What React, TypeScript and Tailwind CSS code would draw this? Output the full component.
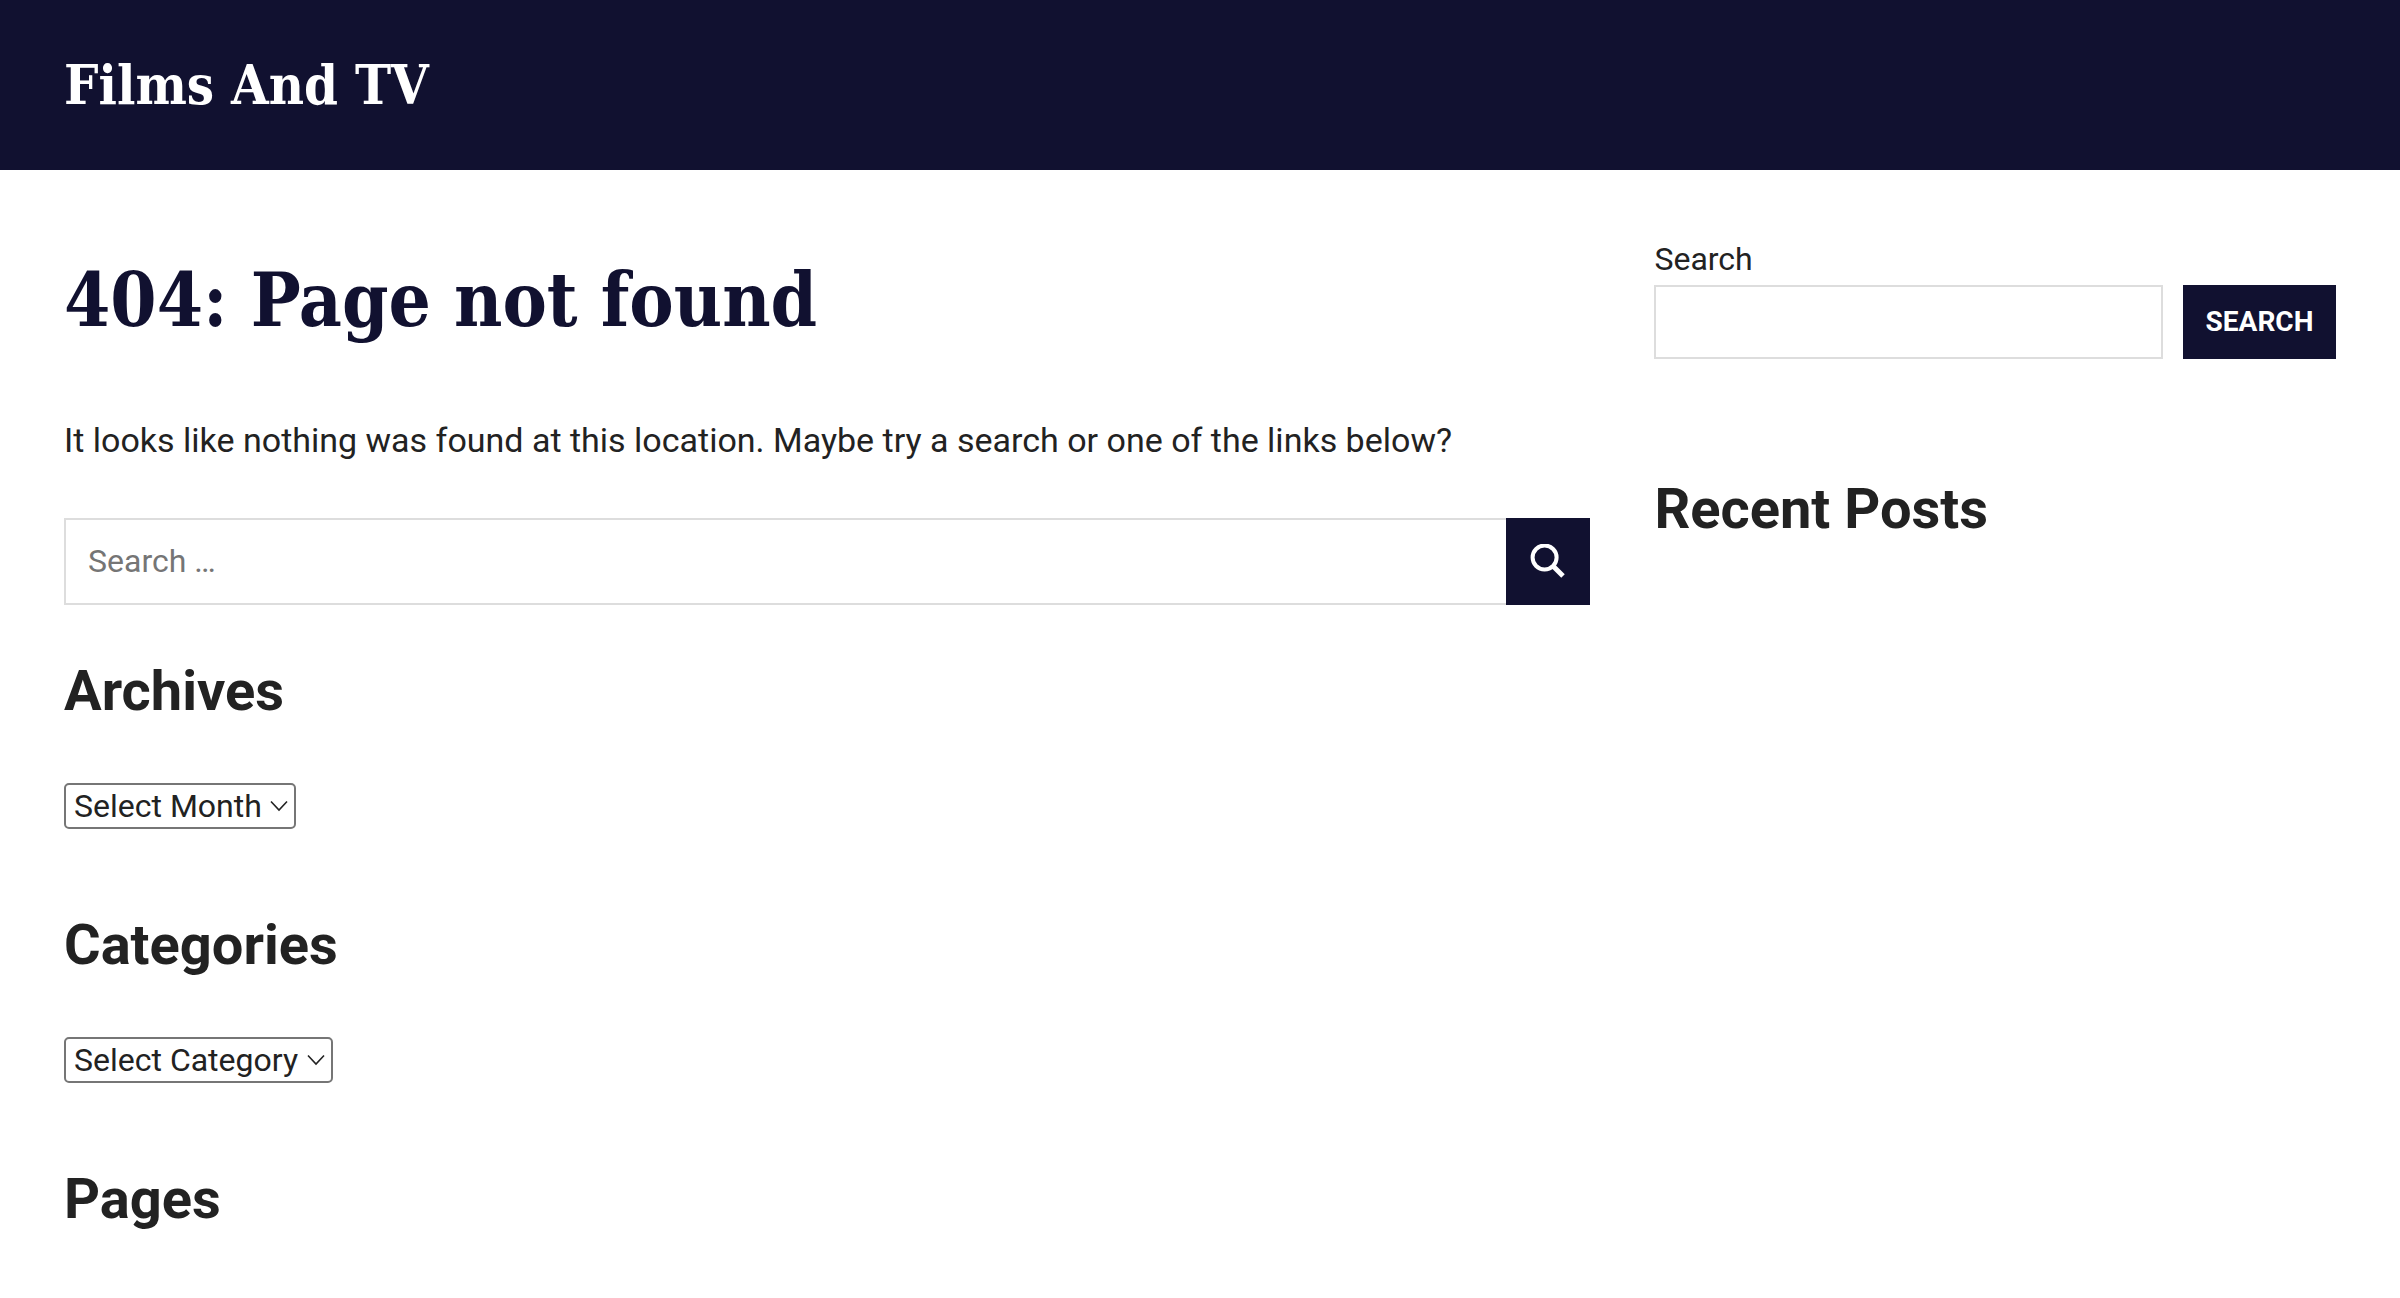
import React from "react";

const slab = "font-['Roboto_Slab','DejaVu_Serif_Condensed','DejaVu_Serif',serif]";

function WidgetTitle({ children }: { children: React.ReactNode }) {
  return <h2 className="text-[56px] leading-[68px] font-bold">{children}</h2>;
}

function DropdownWidget({ id, title, placeholder }: { id: string; title: string; placeholder: string }) {
  return (
    <section className="flex flex-col items-start gap-[58px]">
      <WidgetTitle>{title}</WidgetTitle>
      <div className="relative">
        <select
          id={id}
          aria-label={title}
          className="block h-[46px] appearance-none rounded-[5px] border-2 border-[#767676] bg-white pr-8 pl-2 text-[32px] leading-[40px] text-[#222]"
        >
          <option>{placeholder}</option>
        </select>
        <svg
          className="pointer-events-none absolute top-[17px] right-2 h-[12px] w-[18px]"
          viewBox="0 0 18 12"
          fill="none"
          stroke="#222"
          strokeWidth="1.6"
          aria-hidden="true"
        >
          <path d="M1 1.5l8 8.5 8-8.5" />
        </svg>
      </div>
    </section>
  );
}

export default function App() {
  return (
    <div className="min-h-screen bg-white font-[Roboto,sans-serif] text-[#222]">
      <header className="bg-[#111130] px-16 py-[49px]">
        <p className={`${slab} text-[54px] leading-[72px] font-bold text-white`}>
          <a href="#">Films And TV</a>
        </p>
      </header>

      <div className="flex items-start gap-16 px-16">
        <main className="min-w-0 flex-1 pt-[80px]">
          <h1 className={`${slab} text-[74px] leading-[100px] font-bold text-[#111130]`}>404: Page not found</h1>
          <p className="mt-[64px] text-[34px] leading-[52px]">
            It looks like nothing was found at this location. Maybe try a search or one of the links below?
          </p>
          <form className="mt-[52px] flex h-[87px]" role="search" onSubmit={(e) => e.preventDefault()}>
            <input
              type="search"
              aria-label="Search for"
              placeholder="Search …"
              className="min-w-0 flex-1 border-2 border-r-0 border-[#ddd] px-[22px] pb-[2px] text-[32px] placeholder:text-[#757575]"
            />
            <button type="submit" aria-label="Search" className="flex w-[84px] items-center justify-center bg-[#111130]">
              <svg className="h-[36px] w-[36px]" viewBox="0 0 36 36" fill="none" stroke="#fff" strokeWidth="4" aria-hidden="true">
                <circle cx="14.6" cy="13.5" r="12" />
                <path d="M22.5 21.5l10.5 10.5" strokeWidth="5" />
              </svg>
            </button>
          </form>
          <div className="mt-[52px] flex flex-col gap-[82px] pb-16">
            <DropdownWidget id="archives" title="Archives" placeholder="Select Month" />
            <DropdownWidget id="categories" title="Categories" placeholder="Select Category" />
            <WidgetTitle>Pages</WidgetTitle>
          </div>
        </main>

        <aside className="w-[30%] pt-[64px]">
          <form onSubmit={(e) => e.preventDefault()}>
            <label htmlFor="side-search" className="block text-[32px] leading-[51px]">
              Search
            </label>
            <div className="flex h-[74px] gap-5">
              <input id="side-search" type="search" className="min-w-0 flex-1 border-2 border-[#ddd] px-[22px] text-[32px]" />
              <button type="submit" className="w-[153px] bg-[#111130] text-[28px] font-bold text-white uppercase">
                Search
              </button>
            </div>
          </form>
          <div className="mt-[116px]">
            <WidgetTitle>Recent Posts</WidgetTitle>
          </div>
        </aside>
      </div>
    </div>
  );
}
